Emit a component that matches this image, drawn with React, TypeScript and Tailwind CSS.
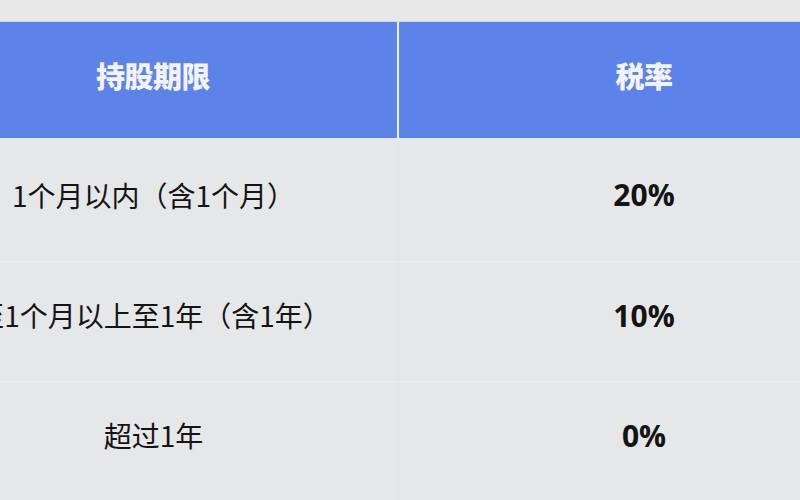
const rows = [
  { term: "1个月以内（含1个月）", rate: "20%" },
  { term: "至1个月以上至1年（含1年）", rate: "10%" },
  { term: "超过1年", rate: "0%" },
]

export default function App() {
  return (
    <div className="w-[800px] h-[500px] overflow-hidden bg-[#e8e8e9] pt-[21px]">
      <div className="ml-[-91px] w-[980px]">
        <div className="grid grid-cols-2 h-[117px] bg-[#5c83e7] border-t border-[#c9d4ee]">
          <div className="flex items-center justify-center border-r-2 border-[#eef1f8] pb-[8px]">
            <span className="text-[29px] font-black text-[#f3f3f5] tracking-[-0.5px] [font-family:'Noto_Sans_CJK_SC',sans-serif]">
              持股期限
            </span>
          </div>
          <div className="flex items-center justify-center pb-[8px]">
            <span className="text-[29px] font-black text-[#f3f3f5] tracking-[-0.5px] [font-family:'Noto_Sans_CJK_SC',sans-serif]">
              税率
            </span>
          </div>
        </div>
        <div className="h-[3px] bg-[#e4e8f0]" />
        {rows.map((r, i) => (
          <div
            key={i}
            className={
              "grid grid-cols-2 h-[120px] bg-[#e6e7e9] " +
              (i > 0 ? "border-t border-[#ececed]" : "")
            }
          >
            <div className="flex items-center justify-center border-r border-[#e2e3e5] pb-[13px]">
              <span className="text-[28px] text-[#141414] whitespace-nowrap [font-family:'Noto_Sans_CJK_SC',sans-serif]">
                {r.term}
              </span>
            </div>
            <div className="flex items-center justify-center pb-[13px]">
              <span className="text-[30px] font-bold text-[#141414] [font-family:'Open_Sans','Noto_Sans',sans-serif]">
                {r.rate}
              </span>
            </div>
          </div>
        ))}
      </div>
    </div>
  )
}
